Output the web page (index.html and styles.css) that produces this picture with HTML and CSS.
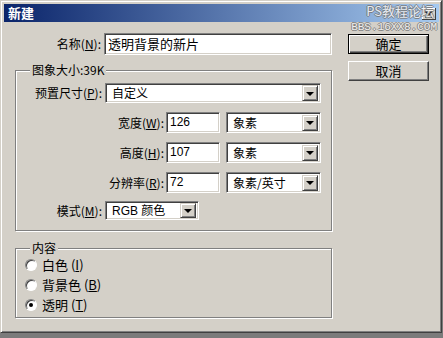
FILE: index.html
```html
<!DOCTYPE html>
<html lang="zh-CN">
<head>
  <meta charset="UTF-8">
  <title>新建</title>
  <link rel="stylesheet" href="styles.css">
</head>
<body>
  <div class="window">
    <div class="titlebar">
      <span class="title-text">新建</span>
      <span class="close-btn">
        <svg width="8" height="7" viewBox="0 0 8 7"><path d="M0.5 0.5 L7 6.5 M7 0.5 L0.5 6.5" stroke="#000" stroke-width="1.6"/></svg>
      </span>
    </div>

    <!-- watermark over the title bar -->
    <div class="watermark">
      <div class="wm-name">PS教程论坛</div>
      <div class="wm-url">BBS.16XX8.COM</div>
    </div>

    <div class="content">
      <div class="form">
        <div class="row name-row">
          <label class="lbl lbl-main">名称(<u>N</u>):</label>
          <div class="field name-field">透明背景的新片</div>
        </div>

        <div class="group size-group">
          <span class="legend">图象大小:39K</span>

          <div class="row preset-row">
            <label class="lbl lbl-main">预置尺寸(<u>P</u>):</label>
            <div class="select preset-select">
              <span class="sel-text">自定义</span>
              <span class="arrow"></span>
            </div>
          </div>

          <div class="row dim-row">
            <label class="lbl lbl-dim">宽度(<u>W</u>):</label>
            <div class="field num-field">126</div>
            <div class="select unit-select">
              <span class="sel-text">象素</span>
              <span class="arrow"></span>
            </div>
          </div>

          <div class="row dim-row">
            <label class="lbl lbl-dim">高度(<u>H</u>):</label>
            <div class="field num-field">107</div>
            <div class="select unit-select">
              <span class="sel-text">象素</span>
              <span class="arrow"></span>
            </div>
          </div>

          <div class="row dim-row">
            <label class="lbl lbl-dim">分辨率(<u>R</u>):</label>
            <div class="field num-field">72</div>
            <div class="select unit-select">
              <span class="sel-text">象素/英寸</span>
              <span class="arrow"></span>
            </div>
          </div>

          <div class="row mode-row">
            <label class="lbl lbl-main">模式(<u>M</u>):</label>
            <div class="select mode-select">
              <span class="sel-text">RGB 颜色</span>
              <span class="arrow"></span>
            </div>
          </div>
        </div>

        <div class="group content-group">
          <span class="legend">内容</span>
          <div class="radio-row"><span class="radio"></span><span class="radio-lbl">白色 (<u>I</u>)</span></div>
          <div class="radio-row"><span class="radio"></span><span class="radio-lbl">背景色 (<u>B</u>)</span></div>
          <div class="radio-row"><span class="radio checked"></span><span class="radio-lbl">透明 (<u>T</u>)</span></div>
        </div>
      </div>

      <div class="buttons">
        <div class="btn default-btn">确定</div>
        <div class="btn">取消</div>
      </div>
    </div>
  </div>
</body>
</html>
```

FILE: styles.css
```css
body {
  margin: 0;
  padding: 0;
  background: #7b7b7b;
  font-family: "Liberation Sans", "Noto Sans CJK SC", sans-serif;
  font-size: 12px;
  color: #000;
}

.window {
  position: relative;
  width: 442px;
  height: 333px;
  box-sizing: border-box;
  background: #d4d0c8;
  border: 1px solid;
  border-color: #d4d0c8 #404040 #404040 #d4d0c8;
  box-shadow: inset 1px 1px #fff, inset -1px -1px #808080;
  padding: 3px 2px 0 3px;
}

.titlebar {
  height: 18px;
  background: linear-gradient(to right, #0a246a, #a6caf0);
  display: flex;
  align-items: center;
  justify-content: space-between;
  padding: 0 3px 0 4px;
}

.title-text {
  color: #fff;
  font-weight: bold;
  font-size: 13px;
  line-height: 18px;
  font-family: "Noto Sans CJK SC", sans-serif;
}

.close-btn {
  width: 14px;
  height: 12px;
  margin-top: 2px;
  background: #d4d0c8;
  box-shadow: inset -1px -1px #404040, inset 1px 1px #fff;
  display: flex;
  align-items: center;
  justify-content: center;
}

.watermark {
  position: absolute;
  top: 3px;
  right: 4px;
  text-align: right;
  color: #f4f4f4;
  text-shadow: 1px 0 #777, -1px 0 #777, 0 1px #777, 0 -1px #777;
  opacity: 0.85;
}

.wm-name {
  font-family: "Noto Sans CJK SC", sans-serif;
  font-size: 13px;
  line-height: 14px;
  margin-right: 3px;
}

.wm-url {
  font-family: "Liberation Mono", monospace;
  font-size: 11px;
  line-height: 11px;
  margin-top: 4px;
}

.content {
  display: flex;
  padding: 11px 0 0 11px;
}

.form {
  width: 317px;
}

.row {
  display: flex;
  align-items: center;
}

.lbl {
  text-align: right;
  flex-shrink: 0;
  font-family: "Noto Sans CJK SC", sans-serif;
  line-height: 14px;
}

.lbl-main {
  width: 86px;
  margin-right: 3px;
}

.lbl-dim {
  width: 148px;
  margin-right: 2px;
}

.field,
.select {
  box-sizing: border-box;
  background: #fff;
  border: 1px solid;
  border-color: #808080 #fff #fff #808080;
  box-shadow: inset 1px 1px #404040, inset -1px -1px #d4d0c8;
  font-family: "Noto Sans CJK SC", sans-serif;
}

.field {
  padding: 0 3px;
  line-height: 18px;
}

.name-field {
  width: 228px;
  height: 22px;
  line-height: 20px;
  font-size: 13px;
}

.name-row {
  margin-bottom: 15px;
}

.group {
  border: 1px solid #808080;
  box-shadow: inset 1px 1px #fff, 1px 1px #fff;
  box-sizing: border-box;
}

.legend {
  display: block;
  width: fit-content;
  height: 14px;
  margin: -8px 0 0 14px;
  padding: 0 2px;
  background: #d4d0c8;
  font-family: "Noto Sans CJK SC", sans-serif;
  line-height: 14px;
}

.size-group {
  height: 161px;
}

.preset-row {
  margin-top: 6px;
}

.select {
  display: flex;
  align-items: center;
  justify-content: space-between;
  padding: 2px 2px 2px 6px;
}

.sel-text {
  line-height: 14px;
}

.preset-select {
  width: 216px;
  height: 20px;
}

.dim-row {
  margin-top: 9px;
}

.num-field {
  width: 54px;
  height: 21px;
  margin-right: 6px;
  font-family: "Liberation Sans", sans-serif;
}

.unit-select {
  width: 95px;
  height: 21px;
}

.mode-row {
  margin-top: 8px;
}

.mode-select {
  width: 94px;
  height: 19px;
  font-family: "Liberation Sans", "Noto Sans CJK SC", sans-serif;
}

.arrow {
  width: 16px;
  height: 16px;
  flex-shrink: 0;
  box-sizing: border-box;
  background: #d4d0c8;
  border: 1px solid;
  border-color: #d4d0c8 #404040 #404040 #d4d0c8;
  box-shadow: inset 1px 1px #fff, inset -1px -1px #808080;
  display: flex;
  align-items: center;
  justify-content: center;
}

.arrow::after {
  content: "";
  border-left: 4px solid transparent;
  border-right: 4px solid transparent;
  border-top: 4px solid #000;
  margin-top: 1px;
}

.mode-select .arrow {
  height: 15px;
}

.content-group {
  margin-top: 17px;
  height: 70px;
}

.radio-row {
  display: flex;
  align-items: center;
  height: 20px;
  padding-left: 9px;
}

.radio {
  width: 12px;
  height: 12px;
  box-sizing: border-box;
  border-radius: 50%;
  background: #fff;
  border: 1px solid;
  border-color: #808080 #fff #fff #808080;
  box-shadow: inset 1px 1px #404040;
  margin-right: 5px;
  display: flex;
  align-items: center;
  justify-content: center;
}

.radio.checked::after {
  content: "";
  width: 4px;
  height: 4px;
  border-radius: 50%;
  background: #000;
}

.radio-lbl {
  font-family: "Noto Sans CJK SC", sans-serif;
  line-height: 14px;
  font-size: 13px;
}

.buttons {
  margin-left: 16px;
  display: flex;
  flex-direction: column;
  gap: 7px;
  padding-top: 1px;
}

.btn {
  width: 81px;
  height: 20px;
  box-sizing: border-box;
  background: #d4d0c8;
  border: 1px solid;
  border-color: #fff #404040 #404040 #fff;
  box-shadow: inset -1px -1px #808080;
  font-family: "Noto Sans CJK SC", sans-serif;
  text-align: center;
  line-height: 17px;
  font-size: 13px;
}

.default-btn {
  border-color: #000;
  box-shadow: inset 1px 1px #fff, inset -1px -1px #404040, inset -2px -2px #808080;
}
```
